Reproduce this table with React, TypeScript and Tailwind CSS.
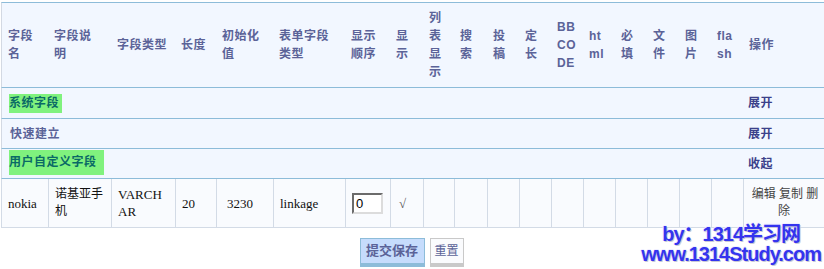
const cols = [48, 63, 64, 41, 57, 72, 45, 33, 31, 33, 32, 32, 32, 32, 32, 32, 32, 32, 80];

const heads: string[][] = [
  ['字段', '名'],
  ['字段说', '明'],
  ['字段类型'],
  ['长度'],
  ['初始化', '值'],
  ['表单字段', '类型'],
  ['显示', '顺序'],
  ['显', '示'],
  ['列', '表', '显', '示'],
  ['搜', '索'],
  ['投', '稿'],
  ['定', '长'],
  ['BB', 'CO', 'DE'],
  ['ht', 'ml'],
  ['必', '填'],
  ['文', '件'],
  ['图', '片'],
  ['fla', 'sh'],
  ['操作'],
];

const font = "font-['Liberation_Sans','Noto_Sans_CJK_SC',sans-serif]";

function Lines({ lines }: { lines: string[] }) {
  return (
    <>
      {lines.map((l, i) => (
        <div key={i} className="whitespace-nowrap">
          {l}
        </div>
      ))}
    </>
  );
}

function GroupRow({
  label,
  action,
  mark,
  h,
}: {
  label: string;
  action: string;
  mark?: 'small' | 'big';
  h: string;
}) {
  return (
    <tr className={h}>
      <td
        colSpan={18}
        className="border-b border-l border-b-[#8dbcd9] border-l-[#d3d9e3] bg-[#f2f7ff] pl-[7px] align-middle text-[12px] font-bold tracking-[0.5px] text-[#5b6398]"
      >
        {mark === 'small' && (
          <span className="inline-block bg-[#80f27e] pr-[3px] leading-[19px] text-[#0a6a66]">{label}</span>
        )}
        {mark === 'big' && (
          <span className="-mt-[3px] block h-[25px] w-fit bg-[#80f27e] pr-[7px] leading-[25px] text-[#0a6a66]">
            {label}
          </span>
        )}
        {!mark && <span className="ml-[1px]">{label}</span>}
      </td>
      <td className="border-b border-b-[#8dbcd9] bg-[#f2f7ff] pl-[4px] align-middle text-[12px] font-bold tracking-[0.5px] text-[#3b418a]">
        {action}
      </td>
    </tr>
  );
}

export default function App() {
  const cell = 'border-r border-b border-[#d3dbe6] px-[6px] align-middle';
  return (
    <div className={`h-[269px] w-[824px] overflow-hidden bg-white ${font}`}>
      <div className="relative ml-[1px] pt-[2px]">
        <table className="w-[823px] table-fixed border-separate border-spacing-0">
          <colgroup>
            {cols.map((w, i) => (
              <col key={i} style={{ width: w }} />
            ))}
          </colgroup>
          <tbody>
            <tr className="h-[86px]">
              {heads.map((lines, i) => (
                <td
                  key={i}
                  className={`border-t border-b border-[#8dbcd9] bg-[#f2f7ff] align-middle text-[12px] leading-[18px] font-bold tracking-[0.5px] text-[#5b6398] ${
                    i === 0 ? 'border-l border-l-[#d3d9e3] pl-[6px]' : 'pl-[5px]'
                  }`}
                >
                  <Lines lines={lines} />
                </td>
              ))}
            </tr>
            <GroupRow label="系统字段" action="展开" mark="small" h="h-[31px]" />
            <GroupRow label="快速建立" action="展开" h="h-[30px]" />
            <GroupRow label="用户自定义字段" action="收起" mark="big" h="h-[30px]" />
            <tr className="h-[49px] bg-[#f9fbfe] font-['Liberation_Serif','Noto_Sans_CJK_SC',serif] text-[13px] leading-[17px] text-[#111]">
              <td className={`${cell} border-l pl-[6px]`}>nokia</td>
              <td className={`${cell} text-[12px]`}>
                <Lines lines={['诺基亚手', '机']} />
              </td>
              <td className={cell}>
                <Lines lines={['VARCH', 'AR']} />
              </td>
              <td className={cell}>20</td>
              <td className={`${cell} pl-[10px]`}>3230</td>
              <td className={cell}>linkage</td>
              <td className={cell}>
                <div className="flex h-[21px] w-[31px] items-center border-2 border-t-[#6b6b6b] border-r-[#dcdcdc] border-b-[#dcdcdc] border-l-[#6b6b6b] bg-white pl-[2px] font-['Liberation_Sans',sans-serif] text-[13px] text-black">
                  0
                </div>
              </td>
              <td className={`${cell} pl-[8px] text-[#555]`}>√</td>
              {Array.from({ length: 10 }).map((_, i) => (
                <td key={i} className={cell} />
              ))}
              <td className="border-b border-[#d3dbe6] px-0 text-center align-middle font-['Liberation_Sans','Noto_Sans_CJK_SC',sans-serif] text-[12px] text-[#444]">
                <div className="whitespace-nowrap pl-[2px]">编辑 复制 删</div>
                <div>除</div>
              </td>
            </tr>
          </tbody>
        </table>

        <div className="mt-[10px] flex justify-center gap-[5px] pr-[2px]">
          <button className="h-[29px] w-[65px] border border-b-4 border-[#8dbcd9] bg-[#c6dcfc] text-[13px] font-bold text-[#5b6398]">
            提交保存
          </button>
          <button className="h-[29px] w-[34px] border border-b-4 border-[#c9c9c9] bg-[#fafbfd] text-[12px] text-[#5b6398]">
            重置
          </button>
        </div>

        <div className="absolute right-[3px] bottom-[3px] text-center text-[20px] leading-[20px] font-bold tracking-[-1px] text-[#3434ef] [text-shadow:1px_1px_0_#c9c9d6,-1px_0_0_#eef,0_-1px_0_#eef]">
          <div>by：1314学习网</div>
          <div>www.1314Study.com</div>
        </div>
      </div>
    </div>
  );
}
